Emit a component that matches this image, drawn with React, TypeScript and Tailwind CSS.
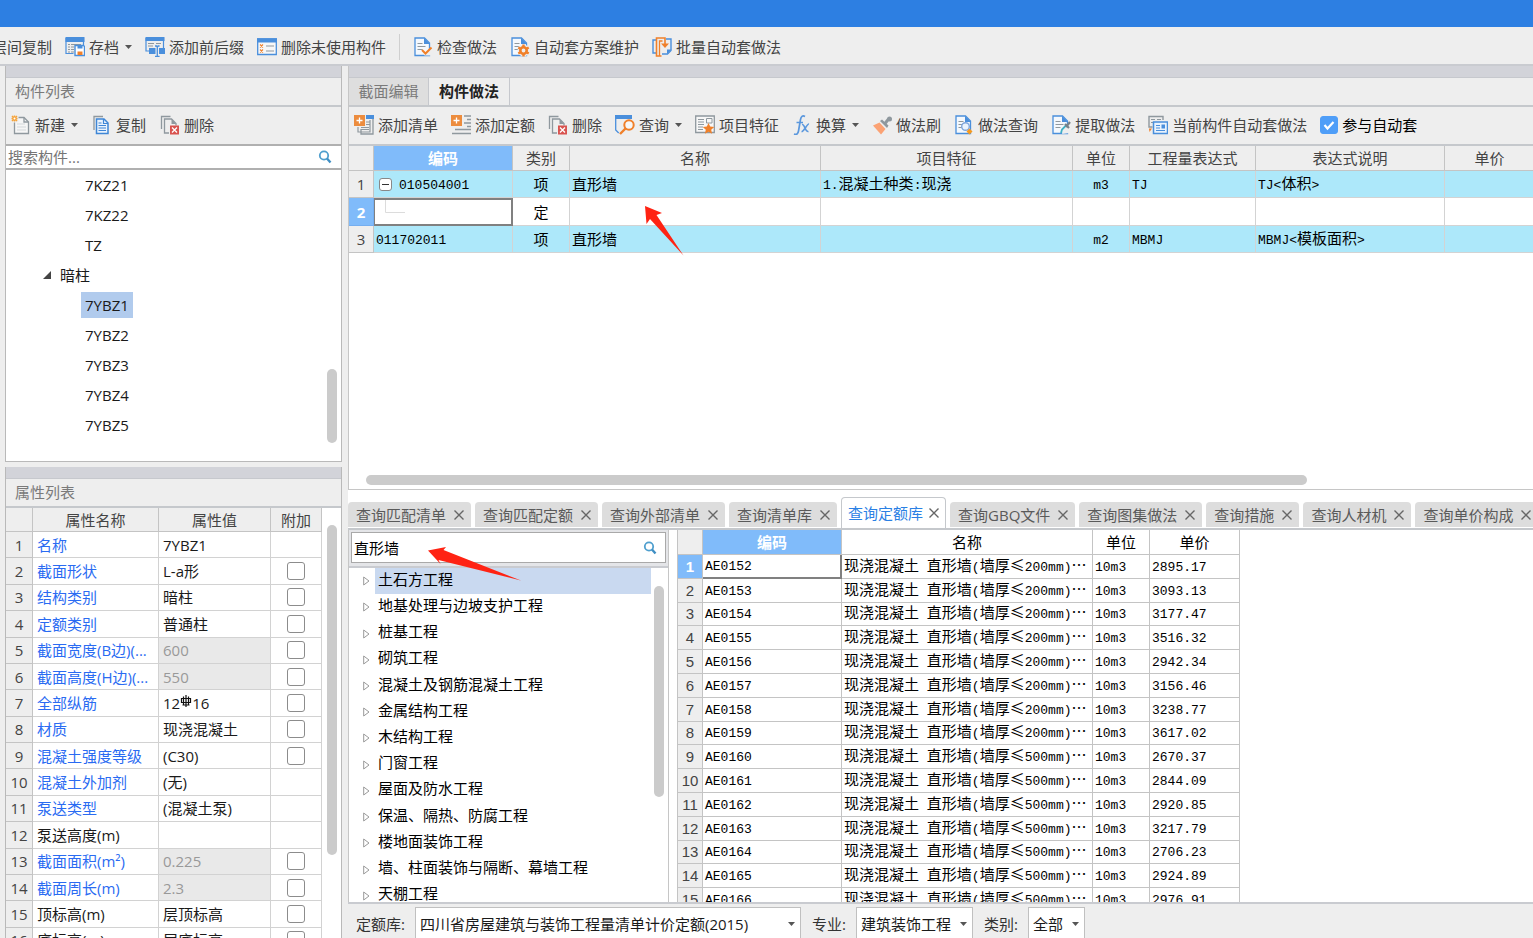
import React, { useState } from 'react';
import { clsx } from 'clsx';

type IconProps = { children: React.ReactNode };

const Icon = ({ children }: IconProps) => (
  <svg viewBox="0 0 20 20" className="h-5 w-5 shrink-0" fill="none" aria-hidden="true">
    {children}
  </svg>
);

const BLUE = '#4a8fdc';
const ORANGE = '#f0802a';
const GREY = '#8f989e';

const ArchiveIcon = () => (
  <Icon>
    <path d="M1 1v15.500h7.500M18.500 1v7" stroke={BLUE} strokeWidth="1.2" />
    <path d="M0.500 0h19v5h-19z" fill={BLUE} />
    <path d="M3 7.500h2M6 7.500h10M3 10h2M6 10h3M3 12.500h2M6 12.500h3M3 15h2M6 15h3" stroke={GREY} strokeWidth="1" />
    <path d="M10 8.500h8.500l1 1v9H10z" fill="#fff" stroke={BLUE} strokeWidth="1.400" />
    <path d="M12.500 9h5v2.500h-5z" fill={BLUE} />
    <path d="M12.500 14.500h5v3.500h-5z" fill={ORANGE} />
  </Icon>
);

const AffixIcon = () => (
  <Icon>
    <path d="M1 1v13h3M18.500 1v13" stroke={BLUE} strokeWidth="1.200" />
    <path d="M0.500 0h19v4h-19z" fill={BLUE} />
    <path d="M3 6.500h6M11 6.500h5M3 9h5" stroke={GREY} strokeWidth="1.200" />
    <path d="M4 11h6.500v6H4zM14 11h6v6h-6z" fill={BLUE} />
    <path d="M10 9h1.500l.8 1 .8-1h1.500M12.300 10v9M10 19.500h1.500l.8-.8.8.8h1.500" stroke={BLUE} strokeWidth="1.300" />
  </Icon>
);

const UnusedIcon = () => (
  <Icon>
    <path d="M.7 2h18.600v15.500H.7z" fill="#f7f7f7" stroke={BLUE} strokeWidth="1.300" />
    <path d="M0 1.300h20v4.200H0z" fill={BLUE} />
    <path d="M3 7.500l3 3m0-3l-3 3M3 12.500l3 3m0-3l-3 3" stroke={ORANGE} strokeWidth="1.100" />
    <path d="M9 9h8M9 14h8" stroke={GREY} strokeWidth="1.200" />
  </Icon>
);

const DocBase = () => (
  <>
    <path d="M2 1h9.500l5 5v12.500H2z" fill="#f4f8fd" stroke={BLUE} strokeWidth="1.300" />
    <path d="M11 1l6 6h-6z" fill={BLUE} />
    <path d="M4.500 6.500h5M4.500 9.500h8M4.500 12.500h5" stroke={GREY} strokeWidth="1.200" />
  </>
);

const CheckDocIcon = () => (
  <Icon>
    <DocBase />
    <path d="M8.500 12.500l4 4 6-7v9h-7z" fill="#eee" />
    <path d="M9 13l3.500 3.500 6-6" stroke={ORANGE} strokeWidth="2" />
  </Icon>
);

const GearDocIcon = () => (
  <Icon>
    <DocBase />
    <circle cx="13.500" cy="13.500" r="6" fill="#eee" />
    <circle cx="13.500" cy="13.500" r="3.200" stroke={ORANGE} strokeWidth="2.600" />
    <path d="M13.500 7.500v2.500M13.500 17v2.500M8.300 10.500l2 1.200M16.700 15.300l2 1.200M8.300 16.500l2-1.200M16.700 11.700l2-1.200" stroke={ORANGE} strokeWidth="2.400" />
  </Icon>
);

const BatchIcon = () => (
  <Icon>
    <path d="M5 3H1v13h3M14 2h5v11.500L15.500 17H10" stroke={BLUE} strokeWidth="1.400" />
    <path d="M19.500 12.500h-4.500V17z" fill={BLUE} />
    <path d="M9.500 19H4.500V1h8.500v6" stroke={ORANGE} strokeWidth="1.600" />
    <path d="M7.500 19V4h3" stroke={ORANGE} strokeWidth="1.300" />
    <path d="M9 6.500h8L13 11z" fill={ORANGE} />
  </Icon>
);

const NewIcon = () => (
  <Icon>
    <path d="M3.500 2.500h9.500l4.500 4.500v11.500h-14z" fill="#f6f6f6" stroke={GREY} strokeWidth="1.300" />
    <path d="M13 2.500V7h4.500" stroke={GREY} strokeWidth="1.300" />
    <path d="M6 9h8M6 12h9M6 15h9" stroke="#d3d7da" />
    <path d="M0 0h7.500v7.500H0z" fill="#eee" />
    <path d="M3.500 .5v6M.5 3.500h6M1 1l5 5M6 1L1 6" stroke="#f5a33b" strokeWidth="1.500" />
    <circle cx="3.500" cy="3.500" r="1" fill="#fff" />
  </Icon>
);

const CopyIcon = () => (
  <Icon>
    <path d="M2 15V1.500h9" stroke={GREY} strokeWidth="1.300" />
    <path d="M4.500 4h7.500l4 4v10.500H4.500z" fill="#eaf3fd" stroke="#3f86d6" strokeWidth="1.500" />
    <path d="M11.500 4v4.500h4.500M6.500 8h3M6.500 10.500h7.500M6.500 13h7.500M6.500 15.500h7.500" stroke="#3f86d6" strokeWidth="1.200" />
  </Icon>
);

const DeleteIcon = () => (
  <Icon>
    <path d="M1.500 14V1.500h9" stroke={GREY} strokeWidth="1.300" />
    <path d="M9 18H4.500V4h7l4.500 4.500v2" stroke={GREY} strokeWidth="1.300" />
    <path d="M11.500 4l4.500 5h-4.500z" fill={GREY} />
    <path d="M10 10.500h9v9h-9z" fill="#d9534f" />
    <path d="M12 12.500l5 5m0-5l-5 5" stroke="#fff" strokeWidth="1.300" />
  </Icon>
);

const PlusBadge = () => (
  <>
    <path d="M0 0h11v11H0z" fill="#ec8c3e" />
    <path d="M5.500 2.500v6M2.500 5.500h6" stroke="#fff" strokeWidth="1.300" />
  </>
);

const AddListIcon = () => (
  <Icon>
    <path d="M4 12v5h12V5" stroke={GREY} strokeWidth="1.200" />
    <path d="M7 14v5h12V4" stroke={GREY} strokeWidth="1.300" />
    <path d="M12 0h8v4h-8z" fill={BLUE} />
    <path d="M12 7h4M12 9.500h4M7 12.500h8M7 14.500h8" stroke={GREY} />
    <PlusBadge />
  </Icon>
);

const AddQuotaIcon = () => (
  <Icon>
    <path d="M13 1h7M16 4.500h4M13 8h7M16 11.500h4M4 14.500h16M1 18.500h19" stroke={GREY} strokeWidth="1.300" />
    <PlusBadge />
  </Icon>
);

const QueryIcon = () => (
  <Icon>
    <path d="M.7 1v14l3 3" stroke={BLUE} strokeWidth="1.300" />
    <path d="M0 0h17v4H0z" fill={BLUE} />
    <circle cx="14" cy="10" r="4.700" fill="#f7f7f7" stroke={ORANGE} strokeWidth="2" />
    <path d="M10.500 13.500L5 19" stroke={ORANGE} strokeWidth="2.400" />
  </Icon>
);

const FeatureIcon = () => (
  <Icon>
    <path d="M.7 1h18.600v16.500H.7z" fill="#f7f7f7" stroke={GREY} strokeWidth="1.300" />
    <path d="M3 4.500h6M3 7h6M3 9.500h6M3 12h5M3 14.500h5" stroke={GREY} />
    <path d="M11.500 3.500h5.500V8h-5.500z" stroke={GREY} />
    <path d="M13.500 8l1.700 3.500 4 .5-3 2.700.8 4-3.500-2-3.600 2 .9-4-3-2.700 4-.5z" fill={ORANGE} />
  </Icon>
);

const FxIcon = () => (
  <Icon>
    <path d="M13 1.500c-2.500-1.500-4 0-4.500 3L6.500 16c-.5 3-2 4-4.500 3M4.500 7.500h6.500" stroke="#5a97dd" strokeWidth="1.700" />
    <path d="M10 9.500c2.800-1 3 8 6.500 7M17 9c-2-.5-5 8-7.500 7.500" stroke="#5a97dd" strokeWidth="1.600" />
  </Icon>
);

const BrushIcon = () => (
  <Icon>
    <path d="M1 10.500l6.500-3 6 6.500L9 19.500z" fill="#fba274" />
    <path d="M8 6l2-1.500 6.500 6L15 13z" fill={GREY} />
    <path d="M13 8.500L16.500 4" stroke={GREY} strokeWidth="3" />
    <circle cx="17.500" cy="4" r="2.500" fill={GREY} />
  </Icon>
);

const DocQueryIcon = () => (
  <Icon>
    <DocBase />
    <circle cx="11.500" cy="11.500" r="3.800" fill="#eaf3fd" stroke="#7fa6dc" strokeWidth="1.400" />
    <path d="M15.500 13.500l3 3-3 3-3-3z" fill="#f79a1e" />
  </Icon>
);

const ExtractIcon = () => (
  <Icon>
    <DocBase />
    <path d="M11 19l1-3.500L18.500 8v10z" fill="#eee" />
    <path d="M10 18l1-3.500 5-5" stroke="#3fb0c4" strokeWidth="1.800" />
    <path d="M14 9l4 4M15 12l4-5" stroke="#76828a" strokeWidth="2.200" />
  </Icon>
);

const AutoIcon = () => (
  <Icon>
    <path d="M4.500 12H1V1.500h14V5" stroke={GREY} strokeWidth="1.400" />
    <path d="M3 4.500h4M9 4.500h4M3 7.500h2" stroke={GREY} strokeWidth="1.200" />
    <path d="M1 13.500h3L1.500 17z" fill={ORANGE} />
    <path d="M5.500 7h14v11.500h-14z" fill="#eaf3fd" stroke={BLUE} strokeWidth="1.500" />
    <path d="M8 10.500h4M8 13h4M8 15.500h9" stroke={BLUE} strokeWidth="1.200" />
    <path d="M13.500 9.500H17v4h-3.500z" fill={BLUE} />
  </Icon>
);

const SearchIcon = () => (
  <svg viewBox="0 0 14 14" className="h-3.5 w-3.5 shrink-0" fill="none" aria-hidden="true">
    <circle cx="6" cy="5.500" r="4.200" stroke="#4f9fce" strokeWidth="1.800" />
    <path d="M9 8.500l3.500 4" stroke="#3f8fc4" strokeWidth="2.400" />
  </svg>
);

const Caret = () => (
  <svg viewBox="0 0 7 4" className="ml-0.5 h-1 w-[7px] shrink-0" aria-hidden="true">
    <path d="M0 0h7L3.500 4z" fill="#555" />
  </svg>
);

interface ToolButtonProps {
  icon?: React.ReactNode;
  label: string;
  menu?: boolean;
}

const ToolButton = ({ icon, label, menu }: ToolButtonProps) => (
  <button type="button" className="flex shrink-0 items-center gap-1 whitespace-nowrap">
    {icon}
    <span>{label}</span>
    {menu && <Caret />}
  </button>
);

// Latin runs use a half-width face, the rest keeps the CJK one
const GridText = ({ text }: { text: string }) => (
  <span className="font-['Noto_Sans_CJK_SC',sans-serif] whitespace-pre">
    {text.split(/([\x20-\x7e]+)/).map((part, i) =>
      i % 2 ? (
        <span key={i} className="font-['Liberation_Mono',monospace] text-[13px]">{part}</span>
      ) : (
        part
      )
    )}
  </span>
);

const components = ['7KZ21', '7KZ22', 'TZ'];
const hiddenColumns = ['7YBZ1', '7YBZ2', '7YBZ3', '7YBZ4', '7YBZ5'];

interface Property {
  name: string;
  value: string;
  plain?: boolean;
  locked?: boolean;
  extra?: boolean;
}

const properties: Property[] = [
  { name: '名称', value: '7YBZ1' },
  { name: '截面形状', value: 'L-a形', extra: true },
  { name: '结构类别', value: '暗柱', extra: true },
  { name: '定额类别', value: '普通柱', extra: true },
  { name: '截面宽度(B边)(...', value: '600', locked: true, extra: true },
  { name: '截面高度(H边)(...', value: '550', locked: true, extra: true },
  { name: '全部纵筋', value: '12#16', extra: true },
  { name: '材质', value: '现浇混凝土', extra: true },
  { name: '混凝土强度等级', value: '(C30)', extra: true },
  { name: '混凝土外加剂', value: '(无)' },
  { name: '泵送类型', value: '(混凝土泵)' },
  { name: '泵送高度(m)', value: '', plain: true },
  { name: '截面面积(m²)', value: '0.225', locked: true, extra: true },
  { name: '截面周长(m)', value: '2.3', locked: true, extra: true },
  { name: '顶标高(m)', value: '层顶标高', plain: true, extra: true },
  { name: '底标高(m)', value: '层底标高', plain: true, extra: true },
];

const queryTabs = [
  '查询匹配清单',
  '查询匹配定额',
  '查询外部清单',
  '查询清单库',
  '查询定额库',
  '查询GBQ文件',
  '查询图集做法',
  '查询措施',
  '查询人材机',
  '查询单价构成',
];

const chapters = [
  '土石方工程',
  '地基处理与边坡支护工程',
  '桩基工程',
  '砌筑工程',
  '混凝土及钢筋混凝土工程',
  '金属结构工程',
  '木结构工程',
  '门窗工程',
  '屋面及防水工程',
  '保温、隔热、防腐工程',
  '楼地面装饰工程',
  '墙、柱面装饰与隔断、幕墙工程',
  '天棚工程',
];

const quotas = [
  { code: 'AE0152', thickness: 200, price: '2895.17' },
  { code: 'AE0153', thickness: 200, price: '3093.13' },
  { code: 'AE0154', thickness: 200, price: '3177.47' },
  { code: 'AE0155', thickness: 200, price: '3516.32' },
  { code: 'AE0156', thickness: 200, price: '2942.34' },
  { code: 'AE0157', thickness: 200, price: '3156.46' },
  { code: 'AE0158', thickness: 200, price: '3238.77' },
  { code: 'AE0159', thickness: 200, price: '3617.02' },
  { code: 'AE0160', thickness: 500, price: '2670.37' },
  { code: 'AE0161', thickness: 500, price: '2844.09' },
  { code: 'AE0162', thickness: 500, price: '2920.85' },
  { code: 'AE0163', thickness: 500, price: '3217.79' },
  { code: 'AE0164', thickness: 500, price: '2706.23' },
  { code: 'AE0165', thickness: 500, price: '2924.89' },
  { code: 'AE0166', thickness: 500, price: '2976.91' },
];

// Steel grade mark between bar count and diameter
const RebarMark = () => (
  <svg viewBox="0 0 12 14" className="inline-block h-3.5 w-3 align-baseline" fill="none" aria-label="三级钢">
    <path d="M1.500 3.500h9v4h-9z" stroke="#111" strokeWidth="1.200" />
    <path d="M6 0v12M3.500 1.500v8M8.500 1.500v8M2.500 10h7" stroke="#111" strokeWidth="1.200" />
  </svg>
);

const PropertyValue = ({ value }: { value: string }) => {
  const [count, size] = value.split('#');
  if (!size) return <>{value}</>;
  return (
    <>
      {count}
      <RebarMark />
      {size}
    </>
  );
};

const PanelTitle = ({ title }: { title: string }) => (
  <>
    <div className="h-3 shrink-0 border-b border-[#c6c8cd] bg-[#d2d3d9]" />
    <h2 className="flex h-[29px] shrink-0 items-center border-b-2 border-[#c5c8cc] bg-[#eeeeee] pb-0.5 pl-[9px] text-[#7a7a7a]">{title}</h2>
  </>
);

const ComponentPanel = () => (
  <section className="flex h-[396px] shrink-0 flex-col border-x border-b border-[#b9b9b9] bg-white">
    <PanelTitle title="构件列表" />
    <div className="flex h-[39px] shrink-0 items-center gap-3.5 border-b-2 border-[#b0b0b0] bg-[#eeeeee] pb-0.5 pl-[5px]">
      <ToolButton icon={<NewIcon />} label="新建" menu />
      <ToolButton icon={<CopyIcon />} label="复制" />
      <ToolButton icon={<DeleteIcon />} label="删除" />
    </div>
    <div className="flex h-6 shrink-0 items-center border-b-2 border-[#b0b0b0] pr-[9px]">
      <input aria-label="搜索构件" placeholder="搜索构件..." className="h-full min-w-0 flex-1 pl-0.5 outline-none placeholder:text-[#757575]" />
      <SearchIcon />
    </div>
    <div className="relative min-h-0 flex-1 overflow-hidden text-[#1a1a1a]">
      <ul>
        {components.map(name => (
          <li key={name} className="flex h-[30px] items-center pl-[79px]">{name}</li>
        ))}
        <li>
          <div className="flex h-[30px] items-center gap-[9px] pl-[37px]">
            <svg viewBox="0 0 8 8" className="h-2 w-2" aria-hidden="true">
              <path d="M8 0v8H0z" fill="#444" />
            </svg>
            暗柱
          </div>
          <ul>
            {hiddenColumns.map((name, i) => (
              <li key={name} className="flex h-[30px] items-center pl-[75px]">
                <span className={clsx('flex h-[26px] items-center px-1', i === 0 && 'bg-[#b1cbed]')}>{name}</span>
              </li>
            ))}
          </ul>
        </li>
      </ul>
      <div className="absolute right-1 bottom-[18px] h-[74px] w-2.5 rounded-full bg-[#cbcbcb]" />
    </div>
  </section>
);

const PropertyPanel = () => (
  <section className="mt-[5px] flex min-h-0 flex-1 flex-col overflow-hidden border-x border-[#b9b9b9] bg-white">
    <PanelTitle title="属性列表" />
    <div className="flex min-h-0 flex-1">
      <table className="h-[446px] w-[316px] shrink-0 table-fixed border-separate border-spacing-0">
        <colgroup>
          <col className="w-[27px]" />
          <col className="w-[126px]" />
          <col className="w-[112px]" />
          <col className="w-[51px]" />
        </colgroup>
        <thead>
          <tr className="h-6 bg-[#eeeeee] text-[#444]">
            {['', '属性名称', '属性值', '附加'].map(head => (
              <th key={head} className="border-r border-b border-[#c4c4c4] font-normal">{head}</th>
            ))}
          </tr>
        </thead>
        <tbody>
          {properties.map((prop, i) => (
            <tr key={prop.name} className="h-6">
              <td className="border-r border-b border-[#c4c4c4] bg-[#eeeeee] text-center text-[#444]">{i + 1}</td>
              <td className={clsx('overflow-hidden border-r border-b border-[#d2d2d2] pl-1 whitespace-nowrap', prop.plain ? 'text-[#1a1a1a]' : 'text-[#2a6bf2]')}>
                {prop.name}
              </td>
              <td className={clsx('border-r border-b border-[#d2d2d2] pl-1 whitespace-nowrap', prop.locked ? 'bg-[#e9e9e9] text-[#999]' : 'text-[#1a1a1a]')}>
                <PropertyValue value={prop.value} />
              </td>
              <td className="border-r border-b border-[#d2d2d2]">
                {prop.extra && (
                  <input type="checkbox" aria-label={prop.name} className="mx-auto block h-[18px] w-[18px] appearance-none rounded-[3px] border border-[#8c8c8c] bg-white" />
                )}
              </td>
            </tr>
          ))}
        </tbody>
      </table>
      <div className="flex flex-1 justify-end pt-[17px] pr-1">
        <div className="h-[330px] w-2.5 rounded-full bg-[#cbcbcb]" />
      </div>
    </div>
  </section>
);

const billHeads = ['编码', '类别', '名称', '项目特征', '单位', '工程量表达式', '表达式说明', '单价'];

const BillTable = () => {
  const cell = 'overflow-hidden border-r border-b border-[#d3d3d3] px-0.5 whitespace-nowrap';

  return (
    <table className="w-full min-w-[1186px] table-fixed border-separate border-spacing-0 text-black">
      <colgroup>
        <col className="w-[25px]" />
        <col className="w-[139px]" />
        <col className="w-[57px]" />
        <col className="w-[251px]" />
        <col className="w-[252px]" />
        <col className="w-[57px]" />
        <col className="w-[126px]" />
        <col className="w-[189px]" />
        <col />
      </colgroup>
      <thead>
        <tr className="h-[25px] bg-[#eeeeee] text-[#444]">
          <th className="border-r border-b border-[#c4c4c4]" />
          {billHeads.map((head, i) => (
            <th key={head} className={clsx('border-r border-b border-[#c4c4c4]', i === 0 ? 'bg-[#80bbfa] font-bold text-white' : 'font-normal')}>
              {head}
            </th>
          ))}
        </tr>
      </thead>
      <tbody>
        <tr className="h-[27px] bg-[#ade8fa]">
          <td className="border-r border-b border-[#c4c4c4] bg-[#eeeeee] text-center text-[#444]">1</td>
          <td className={cell}>
            <div className="flex items-center gap-[7px] pl-[3px]">
              <button type="button" aria-label="收起" className="flex h-[13px] w-[13px] items-center justify-center rounded-[3px] border border-[#888] bg-white">
                <span className="h-px w-[7px] bg-[#333]" />
              </button>
              <GridText text="010504001" />
            </div>
          </td>
          <td className={clsx(cell, 'text-center')}>项</td>
          <td className={cell}>直形墙</td>
          <td className={cell}><GridText text="1.混凝土种类:现浇" /></td>
          <td className={clsx(cell, 'text-center')}><GridText text="m3" /></td>
          <td className={cell}><GridText text="TJ" /></td>
          <td className={cell}><GridText text="TJ<体积>" /></td>
          <td className={cell} />
        </tr>
        <tr className="h-7 bg-white">
          <td className="border-r border-b border-[#74aef0] bg-[#80bbfa] text-center font-bold text-white">2</td>
          <td className="border-2 border-l border-[#808080] p-0 align-top">
            <svg viewBox="0 0 20 13" className="ml-2.5 block h-[13px] w-5" fill="none" aria-hidden="true">
              <path d="M.5 0v12.500H20" stroke="#dcdcdc" />
            </svg>
          </td>
          <td className={clsx(cell, 'text-center')}>定</td>
          <td className={cell} />
          <td className={cell} />
          <td className={cell} />
          <td className={cell} />
          <td className={cell} />
          <td className={cell} />
        </tr>
        <tr className="h-[27px] bg-[#ade8fa]">
          <td className="border-r border-b border-[#c4c4c4] bg-[#eeeeee] text-center text-[#444]">3</td>
          <td className={cell}><GridText text="011702011" /></td>
          <td className={clsx(cell, 'text-center')}>项</td>
          <td className={cell}>直形墙</td>
          <td className={cell} />
          <td className={clsx(cell, 'text-center')}><GridText text="m2" /></td>
          <td className={cell}><GridText text="MBMJ" /></td>
          <td className={cell}><GridText text="MBMJ<模板面积>" /></td>
          <td className={cell} />
        </tr>
      </tbody>
    </table>
  );
};

const MethodPanel = () => {
  const [auto, setAuto] = useState(true);

  return (
    <section className="relative flex h-[424px] shrink-0 flex-col overflow-hidden border-b border-l border-[#c6c6c6] bg-white">
      <div className="h-3 shrink-0 border-b border-[#c6c8cd] bg-[#d2d3d9]" />
      <div className="flex h-[29px] shrink-0 border-b-2 border-[#c5c8cc] bg-[#eeeeee]">
        <button type="button" className="w-20 border-r border-[#c6c8cd] bg-[#dedede] pb-0.5 text-[#7a7a7a]">截面编辑</button>
        <button type="button" className="w-[81px] border-r border-[#c6c8cd] pb-0.5 font-bold text-[#222]">构件做法</button>
      </div>
      <div className="flex h-[39px] shrink-0 items-center gap-[13px] border-b-2 border-[#c5c8cc] bg-[#eeeeee] pb-0.5 pl-[5px]">
        <ToolButton icon={<AddListIcon />} label="添加清单" />
        <ToolButton icon={<AddQuotaIcon />} label="添加定额" />
        <ToolButton icon={<DeleteIcon />} label="删除" />
        <ToolButton icon={<QueryIcon />} label="查询" menu />
        <ToolButton icon={<FeatureIcon />} label="项目特征" />
        <ToolButton icon={<FxIcon />} label="换算" menu />
        <ToolButton icon={<BrushIcon />} label="做法刷" />
        <ToolButton icon={<DocQueryIcon />} label="做法查询" />
        <ToolButton icon={<ExtractIcon />} label="提取做法" />
        <ToolButton icon={<AutoIcon />} label="当前构件自动套做法" />
        <label className="flex shrink-0 items-center gap-1 text-black">
          <span className="relative flex">
            <input
              type="checkbox"
              checked={auto}
              onChange={e => setAuto(e.target.checked)}
              className="h-[18px] w-[18px] appearance-none rounded-[3px] border border-[#4f9ef8] bg-white checked:bg-[#4f9ef8]"
            />
            {auto && (
              <svg viewBox="0 0 18 18" className="pointer-events-none absolute inset-0" fill="none" aria-hidden="true">
                <path d="M4.500 9l3 3.500 6-6.500" stroke="#fff" strokeWidth="2.200" />
              </svg>
            )}
          </span>
          参与自动套
        </label>
      </div>
      <BillTable />
      <div className="mt-auto mr-[226px] mb-1 ml-[17px] h-2.5 shrink-0 rounded-full bg-[#cbcbcb]" />
      <svg viewBox="0 0 39 51" className="absolute top-[139px] left-[296px] h-[51px] w-[39px]" aria-hidden="true">
        <path d="M0 1l17 7-5.500 2L38.500 50.500 5 14 1.500 19z" fill="#ff2313" />
      </svg>
    </section>
  );
};

const QuotaTable = () => (
  <table className="h-[382px] w-[562px] shrink-0 table-fixed border-separate border-spacing-0 leading-4 text-black">
    <colgroup>
      <col className="w-[25px]" />
      <col className="w-[139px]" />
      <col className="w-[251px]" />
      <col className="w-[57px]" />
      <col className="w-[90px]" />
    </colgroup>
    <thead>
      <tr className="h-[25px]">
        <th className="border-r border-b border-[#c4c4c4] bg-[#eeeeee]" />
        {['编码', '名称', '单位', '单价'].map((head, i) => (
          <th key={head} className={clsx('border-r border-b border-[#c4c4c4]', i === 0 ? 'bg-[#80bbfa] font-bold text-white' : 'font-normal')}>
            {head}
          </th>
        ))}
      </tr>
    </thead>
    <tbody>
      {quotas.map((quota, i) => (
        <tr key={quota.code} className="h-[23px]">
          <td className={clsx('border-r border-b border-[#c4c4c4] text-center', i === 0 ? 'bg-[#80bbfa] font-bold text-white' : 'bg-[#eeeeee] text-[#444]')}>
            <span className="font-['Liberation_Sans','Noto_Sans',sans-serif]">{i + 1}</span>
          </td>
          <td className={clsx('pl-0.5', i === 0 ? 'border-r-2 border-b-2 border-[#808080]' : 'border-r border-b border-[#c4c4c4]')}>
            <GridText text={quota.code} />
          </td>
          <td className="overflow-hidden border-r border-b border-[#c4c4c4] pl-0.5 whitespace-nowrap">
            <GridText text={`现浇混凝土 直形墙(墙厚≤${quota.thickness}mm)…`} />
          </td>
          <td className="border-r border-b border-[#c4c4c4] pl-0.5"><GridText text="10m3" /></td>
          <td className="border-r border-b border-[#c4c4c4] pl-0.5"><GridText text={quota.price} /></td>
        </tr>
      ))}
    </tbody>
  </table>
);

const ChapterTree = () => {
  const [keyword, setKeyword] = useState('直形墙');

  return (
    <div className="relative flex w-[321px] shrink-0 flex-col border-x border-[#c6c6c6]">
      <div className="h-[38px] shrink-0 border-b-2 border-[#c9cbd0] bg-[#e4e5e8] px-0.5 pt-0.5 pb-[3px]">
        <div className="flex h-full items-center border border-[#a9a9a9] bg-white pr-2">
          <input
            aria-label="查询定额"
            value={keyword}
            onChange={e => setKeyword(e.target.value)}
            className="h-full min-w-0 flex-1 pl-0.5 text-black outline-none"
          />
          <SearchIcon />
        </div>
      </div>
      <ul className="grid h-[341px] shrink-0 auto-rows-fr text-black">
        {chapters.map((chapter, i) => (
          <li key={chapter} className="flex items-center pl-3.5">
            <svg viewBox="0 0 7 10" className="mr-[5px] h-2.5 w-[7px] shrink-0" fill="none" aria-hidden="true">
              <path d="M.7 1v8L6 5z" stroke="#999" />
            </svg>
            <span className={clsx('mr-[17px] flex h-full flex-1 items-center pb-[5px] pl-[3px] whitespace-nowrap', i === 0 && 'bg-[#c9d9f0]')}>{chapter}</span>
          </li>
        ))}
      </ul>
      <div className="absolute top-14 right-1 h-[211px] w-2.5 rounded-full bg-[#cbcbcb]" />
      <svg viewBox="0 0 93 34" className="absolute top-[17px] left-[79px] h-[34px] w-[93px]" aria-hidden="true">
        <path d="M0 3.500L18 0l-2.500 3L93 33.500 10.500 13l2 4z" fill="#ff2313" />
      </svg>
    </div>
  );
};

interface FilterProps {
  id: string;
  label: string;
  value: string;
  width: string;
}

const Filter = ({ id, label, value, width }: FilterProps) => (
  <div className="flex h-[34px] shrink-0 items-center gap-2.5">
    <label htmlFor={id} className="whitespace-nowrap">{label}:</label>
    <div className={clsx('relative h-full', width)}>
      <select id={id} className="h-full w-full appearance-none border border-[#c0c0c0] bg-white pl-1 text-[#1a1a1a]">
        <option>{value}</option>
      </select>
      <div className="pointer-events-none absolute inset-y-0 right-1.5 flex items-center">
        <Caret />
      </div>
    </div>
  </div>
);

const QueryPanel = () => {
  const [activeTab, setActiveTab] = useState('查询定额库');

  return (
    <section className="flex min-h-0 flex-1 flex-col bg-white">
      <div className="flex h-10 shrink-0 items-end gap-1 overflow-hidden border-b-2 border-[#c5c8cc]">
        {queryTabs.map(tab => (
          <div
            key={tab}
            className={clsx(
              'flex shrink-0 items-center rounded-t-[4px] whitespace-nowrap',
              tab === activeTab
                ? 'h-[31px] gap-1.5 border-x border-t border-[#c5c8cc] bg-white px-1.5 text-[#2a80e4]'
                : 'mb-px h-[25px] gap-2 bg-[#dddddd] pr-[7px] pl-2 text-[#5a5a5a]'
            )}
          >
            <button type="button" onClick={() => setActiveTab(tab)}>{tab}</button>
            <button type="button" aria-label={`关闭${tab}`}>
              <svg viewBox="0 0 10 10" className="h-2.5 w-2.5" fill="none" aria-hidden="true">
                <path d="M.5.5l9 9m0-9l-9 9" stroke="#666" strokeWidth="1.400" />
              </svg>
            </button>
          </div>
        ))}
      </div>
      <div className="flex min-h-0 flex-1 overflow-hidden">
        <ChapterTree />
        <div className="ml-2 min-w-0 flex-1 overflow-hidden border-l border-[#c4c4c4]">
          <QuotaTable />
        </div>
      </div>
      <div className="flex h-9 shrink-0 items-start gap-[11px] overflow-hidden border-t-2 border-[#c9cbd0] bg-[#eeeeee] pt-[3px] pl-2 text-[#333]">
        <Filter id="library" label="定额库" value="四川省房屋建筑与装饰工程量清单计价定额(2015)" width="w-[386px]" />
        <Filter id="major" label="专业" value="建筑装饰工程" width="w-[117px]" />
        <Filter id="category" label="类别" value="全部" width="w-[57px]" />
      </div>
    </section>
  );
};

const App = () => (
  <div
    lang="zh-CN"
    className="flex h-screen flex-col overflow-hidden bg-[#eeeeee] font-['Open_Sans','Noto_Sans_CJK_SC',sans-serif] text-[15px] leading-5 text-[#444]"
  >
    <div className="h-[27px] shrink-0 bg-[#2d7fe2]" />
    <header className="flex h-[39px] shrink-0 items-center gap-[13px] overflow-hidden border-b-2 border-[#c9cbd0] pt-0.5">
      <div className="-ml-2">
        <ToolButton label="层间复制" />
      </div>
      <ToolButton icon={<ArchiveIcon />} label="存档" menu />
      <ToolButton icon={<AffixIcon />} label="添加前后缀" />
      <ToolButton icon={<UnusedIcon />} label="删除未使用构件" />
      <div className="h-[26px] w-px bg-[#cfcfcf]" />
      <ToolButton icon={<CheckDocIcon />} label="检查做法" />
      <ToolButton icon={<GearDocIcon />} label="自动套方案维护" />
      <ToolButton icon={<BatchIcon />} label="批量自动套做法" />
    </header>
    <div className="flex min-h-0 flex-1">
      <aside className="ml-[5px] flex w-[337px] shrink-0 flex-col">
        <ComponentPanel />
        <PropertyPanel />
      </aside>
      <main className="ml-1.5 flex min-w-0 flex-1 flex-col">
        <MethodPanel />
        <QueryPanel />
      </main>
    </div>
  </div>
);

export default App;
